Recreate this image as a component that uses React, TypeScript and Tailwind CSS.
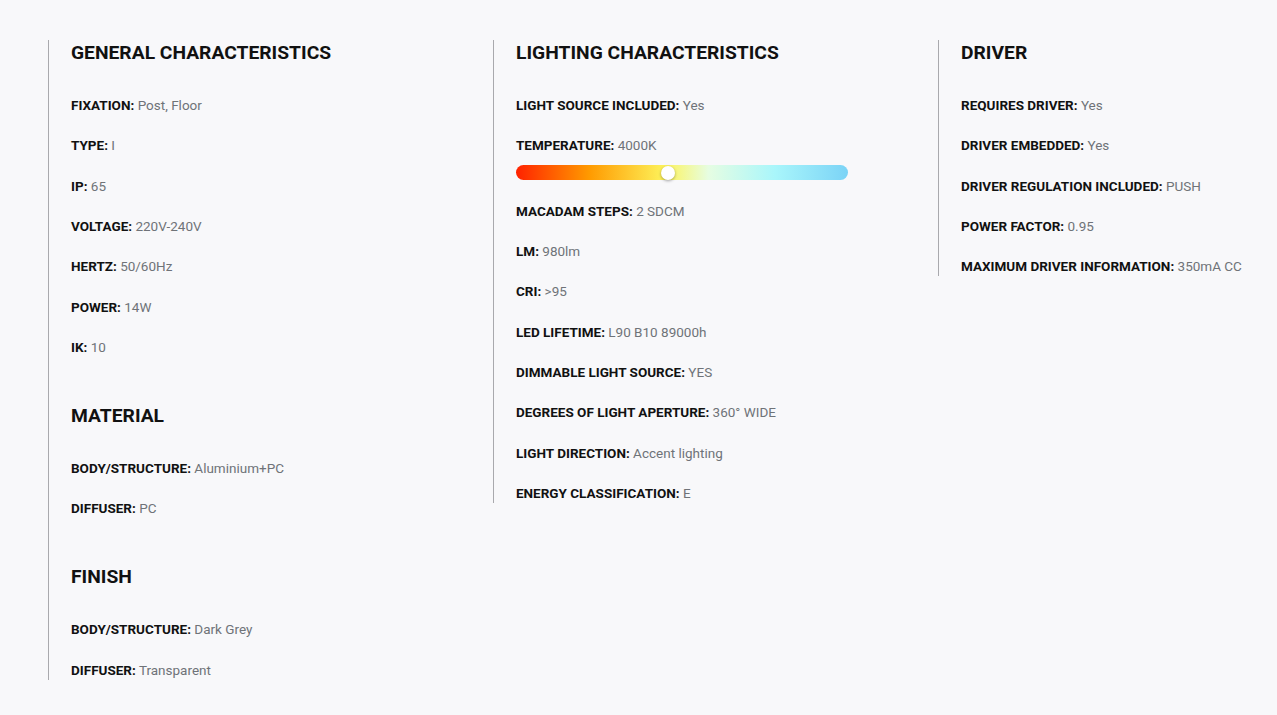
import React from 'react';

type Row = { label: string; value: string; temperature?: boolean };
type Section = { title: string; rows: Row[] };

const columns: Section[][] = [
  [
    {
      title: 'GENERAL CHARACTERISTICS',
      rows: [
        { label: 'FIXATION', value: 'Post, Floor' },
        { label: 'TYPE', value: 'I' },
        { label: 'IP', value: '65' },
        { label: 'VOLTAGE', value: '220V-240V' },
        { label: 'HERTZ', value: '50/60Hz' },
        { label: 'POWER', value: '14W' },
        { label: 'IK', value: '10' },
      ],
    },
    {
      title: 'MATERIAL',
      rows: [
        { label: 'BODY/STRUCTURE', value: 'Aluminium+PC' },
        { label: 'DIFFUSER', value: 'PC' },
      ],
    },
    {
      title: 'FINISH',
      rows: [
        { label: 'BODY/STRUCTURE', value: 'Dark Grey' },
        { label: 'DIFFUSER', value: 'Transparent' },
      ],
    },
  ],
  [
    {
      title: 'LIGHTING CHARACTERISTICS',
      rows: [
        { label: 'LIGHT SOURCE INCLUDED', value: 'Yes' },
        { label: 'TEMPERATURE', value: '4000K', temperature: true },
        { label: 'MACADAM STEPS', value: '2 SDCM' },
        { label: 'LM', value: '980lm' },
        { label: 'CRI', value: '>95' },
        { label: 'LED LIFETIME', value: 'L90 B10 89000h' },
        { label: 'DIMMABLE LIGHT SOURCE', value: 'YES' },
        { label: 'DEGREES OF LIGHT APERTURE', value: '360° WIDE' },
        { label: 'LIGHT DIRECTION', value: 'Accent lighting' },
        { label: 'ENERGY CLASSIFICATION', value: 'E' },
      ],
    },
  ],
  [
    {
      title: 'DRIVER',
      rows: [
        { label: 'REQUIRES DRIVER', value: 'Yes' },
        { label: 'DRIVER EMBEDDED', value: 'Yes' },
        { label: 'DRIVER REGULATION INCLUDED', value: 'PUSH' },
        { label: 'POWER FACTOR', value: '0.95' },
        { label: 'MAXIMUM DRIVER INFORMATION', value: '350mA CC' },
      ],
    },
  ],
];

function TemperatureBar() {
  return (
    <div className="relative mt-[10px] h-[15px] w-[332px] rounded-full bg-[linear-gradient(90deg,#ff2200_0%,#ff9a00_22%,#fdf45c_45%,#e6fde2_58%,#a9f6fb_78%,#7bd3f6_100%)]">
      <span className="absolute top-1/2 left-[145px] h-[14px] w-[14px] -translate-y-1/2 rounded-full bg-white shadow-[0_1px_3px_rgba(0,0,0,0.35)]" />
    </div>
  );
}

export default function App() {
  return (
    <div className="min-h-[715px] overflow-hidden bg-[#f8f8fa] pt-10 pl-12 font-['Roboto',sans-serif]">
      <div className="flex items-start">
        {columns.map((sections, i) => (
          <div
            key={i}
            className="flex w-[445px] shrink-0 flex-col gap-[46px] border-l border-[#a9a9ad] pl-[22px]"
          >
            {sections.map((section) => (
              <div key={section.title}>
                <h2 className="text-[19.25px] leading-[26px] font-bold text-[#111]">{section.title}</h2>
                <div className="mt-[29px] flex flex-col gap-[20.33px]">
                  {section.rows.map((row) => (
                    <div key={row.label}>
                      <p className="text-[13.5px] leading-[20px] whitespace-nowrap">
                        <span className="font-bold text-[#111]">{row.label}:</span>{' '}
                        <span className="text-[#6f7378]">{row.value}</span>
                      </p>
                      {row.temperature && <TemperatureBar />}
                    </div>
                  ))}
                </div>
              </div>
            ))}
          </div>
        ))}
      </div>
    </div>
  );
}
